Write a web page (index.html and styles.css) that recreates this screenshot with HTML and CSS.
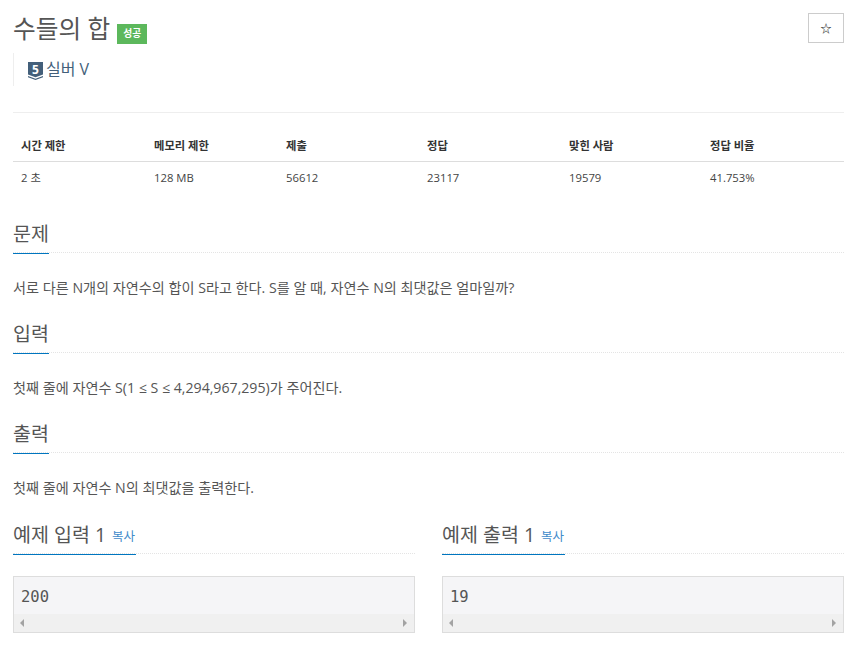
FILE: index.html
```html
<!DOCTYPE html>
<html lang="ko">
<head>
<meta charset="utf-8">
<title>수들의 합</title>
<link rel="stylesheet" href="styles.css">
</head>
<body>
<div class="page">
  <header class="head">
    <div class="head-main">
      <h1 class="title"><span>수들의 합</span><span class="badge">성공</span></h1>
      <div class="tier">
        <svg class="tier-icon" width="15" height="18" viewBox="0 0 15 18"><path d="M0 0H15V12.5L7.5 15.2L0 12.5Z" fill="#435f7a"/><path d="M0 14L7.5 16.7L15 14V15.3L7.5 18L0 15.3Z" fill="#435f7a"/><text x="7.5" y="11.5" text-anchor="middle" class="tier-num">5</text></svg>
        <span>실버 V</span>
      </div>
    </div>
    <button class="star">☆</button>
  </header>
  <hr class="rule">
  <table class="info">
    <thead>
      <tr><th class="c1">시간 제한</th><th class="c2">메모리 제한</th><th class="c3">제출</th><th class="c4">정답</th><th class="c3">맞힌 사람</th><th>정답 비율</th></tr>
    </thead>
    <tbody>
      <tr><td>2 초</td><td>128 MB</td><td>56612</td><td>23117</td><td>19579</td><td>41.753%</td></tr>
    </tbody>
  </table>
  <section class="sec sec-first">
    <div class="sec-head"><h2 class="sec-title">문제</h2></div>
    <p class="sec-text">서로 다른 N개의 자연수의 합이 S라고 한다. S를 알 때, 자연수 N의 최댓값은 얼마일까?</p>
  </section>
  <section class="sec">
    <div class="sec-head"><h2 class="sec-title">입력</h2></div>
    <p class="sec-text">첫째 줄에 자연수 S(1 ≤ S ≤ 4,294,967,295)가 주어진다.</p>
  </section>
  <section class="sec">
    <div class="sec-head"><h2 class="sec-title">출력</h2></div>
    <p class="sec-text">첫째 줄에 자연수 N의 최댓값을 출력한다.</p>
  </section>
  <div class="samples">
    <section class="sample">
      <div class="sec-head"><h2 class="sec-title sample-title">예제 입력 1 <a class="copy">복사</a></h2></div>
      <div class="code"><pre class="code-text">200</pre><div class="bar"><i class="arrow left"></i><i class="arrow right"></i></div></div>
    </section>
    <section class="sample">
      <div class="sec-head"><h2 class="sec-title sample-title">예제 출력 1 <a class="copy">복사</a></h2></div>
      <div class="code"><pre class="code-text">19</pre><div class="bar"><i class="arrow left"></i><i class="arrow right"></i></div></div>
    </section>
  </div>
</div>
</body>
</html>
```
FILE: styles.css
```css
* { box-sizing: border-box; }
html, body { margin: 0; padding: 0; background: #fff; overflow: hidden; }
body {
  font-family: "Open Sans", "Noto Sans CJK KR", sans-serif;
  font-size: 14.15px;
  line-height: 20px;
  color: #555;
}
.page { padding: 0 13px; width: 857px; height: 647px; overflow: hidden; }
.head { display: flex; justify-content: space-between; align-items: flex-start; padding-top: 13px; }
.title { margin: 0; font-size: 24.7px; line-height: 32px; font-weight: 400; color: #555; display: flex; align-items: flex-start; }
.badge {
  margin: 11px 0 0 7px; width: 30px; height: 20px;
  background: #5cb85c; color: #fff; font-size: 9.75px; font-weight: 700; line-height: 20px; text-align: center;
}
.tier {
  margin-top: 8px; height: 33px; border-left: 1px solid #eee; padding-left: 14px;
  display: flex; align-items: flex-start; gap: 3px; font-size: 16px; line-height: 32px; color: #435f7a;
}
.tier-icon { margin-top: 9px; }
.tier-num { font: 700 12px "Open Sans", sans-serif; fill: #fff; }
.star {
  width: 36px; height: 30px; padding: 0; background: #fff; border: 1px solid #ccc; border-radius: 0;
  font: 700 11px/28px "Noto Sans CJK KR", sans-serif; color: #333;
}
.rule { margin: 26px 0 0; border: 0; border-top: 1px solid #eee; }
.info { margin-top: 15px; width: 831px; border-collapse: collapse; table-layout: fixed; font-size: 11.3px; }
.info th { text-align: left; font-weight: 700; color: #333; padding: 10px 8px 7px; line-height: 16px; height: 33px; border-bottom: 1px solid #ddd; }
.info td { padding: 8px; line-height: 16px; height: 31px; color: #444; }
.c1 { width: 133px; }
.c2 { width: 132px; }
.c3 { width: 141px; }
.c4 { width: 142px; }
.sec { margin-top: 22px; }
.sec-first { margin-top: 26px; }
.sec-head { border-bottom: 1px dotted #e4e4e4; height: 33px; }
.sec-title {
  display: inline-block; margin: 0; height: 34px; border-bottom: 1px solid #0076c0;
  font-size: 19.5px; line-height: 27px; font-weight: 400; color: #555;
}
.sec-text { margin: 25px 0 0; line-height: 20px; }
.samples { display: grid; grid-template-columns: 402px 402px; gap: 27px; margin-top: 23px; }
.sample-title { padding-right: 0.5px; }
.copy { font-size: 12.5px; color: #428bca; margin-left: 1px; vertical-align: 1px; }
.code { margin-top: 22px; height: 57px; border: 1px solid #ddd; background: #f5f5f7; }
.code-text { margin: 0; height: 37px; padding: 10px 7px 0; font: 15.5px/20px "DejaVu Sans Mono", monospace; color: #555; }
.bar { height: 18px; background: #f0f0f0; display: flex; justify-content: space-between; align-items: center; padding: 0 7px 0 6px; }
.arrow { width: 0; height: 0; border-top: 4px solid transparent; border-bottom: 4px solid transparent; }
.arrow.left { border-right: 4px solid #a3a3a3; }
.arrow.right { border-left: 4px solid #a3a3a3; }
```
